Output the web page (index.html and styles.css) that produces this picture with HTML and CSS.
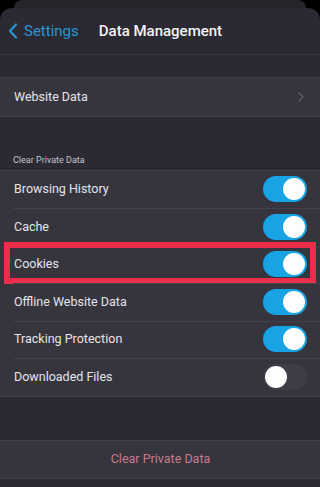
FILE: index.html
```html
<!DOCTYPE html>
<html>
<head>
<meta charset="utf-8">
<link rel="stylesheet" href="styles.css">
</head>
<body>
<div class="backsheet"></div>
<div class="sheet">
  <div class="nav">
    <div class="back">
      <svg class="chev" width="10" height="16" viewBox="0 0 10 16"><path d="M8 1.5 L2 8 L8 14.5" fill="none" stroke="#2796cf" stroke-width="2.2" stroke-linecap="round" stroke-linejoin="round"/></svg>
      <span>Settings</span>
    </div>
    <div class="title">Data Management</div>
  </div>
  <div class="gap1"></div>
  <div class="group">
    <div class="row link">
      <span class="label">Website Data</span>
      <svg class="disc" width="6" height="10" viewBox="0 0 6 10"><path d="M1 1 L5 5 L1 9" fill="none" stroke="#5f5e68" stroke-width="1.4" stroke-linecap="round" stroke-linejoin="round"/></svg>
    </div>
  </div>
  <div class="header">Clear Private Data</div>
  <div class="group">
    <div class="row"><span class="label">Browsing History</span><span class="toggle on"></span></div>
    <div class="row"><span class="label">Cache</span><span class="toggle on"></span></div>
    <div class="row highlight"><span class="label">Cookies</span><span class="toggle on"></span></div>
    <div class="row"><span class="label">Offline Website Data</span><span class="toggle on"></span></div>
    <div class="row"><span class="label">Tracking Protection</span><span class="toggle on"></span></div>
    <div class="row"><span class="label">Downloaded Files</span><span class="toggle"></span></div>
  </div>
  <div class="gap2"></div>
  <div class="group">
    <div class="row button">Clear Private Data</div>
  </div>
</div>
</body>
</html>
```
FILE: styles.css
```css
* { box-sizing: border-box; }
html, body { margin: 0; padding: 0; }
body {
  background: #000;
  width: 320px;
  height: 487px;
  overflow: hidden;
  font-family: Roboto, "Noto Sans", sans-serif;
}
.backsheet {
  height: 8px;
  margin: 0 14px;
  background: #26252c;
  border-radius: 12px 12px 0 0;
}
.sheet {
  background: #2b2a33;
  border-radius: 12px 12px 0 0;
  height: 479px;
  overflow: hidden;
}
.nav {
  height: 47px;
  display: flex;
  align-items: center;
  border-bottom: 1px solid #3a3942;
  padding-left: 8px;
}
.back {
  display: flex;
  align-items: center;
  gap: 6px;
  color: #2796cf;
  font-size: 15px;
}
.title {
  margin-left: 20px;
  color: #f2f2f5;
  font-size: 15px;
  font-weight: 500;
}
.gap1 { height: 22px; }
.group {
  background: #36353e;
  border-top: 1px solid #403f48;
  border-bottom: 1px solid #403f48;
}
.row {
  height: 37.5px;
  display: flex;
  align-items: center;
  justify-content: space-between;
  padding: 0 13px 0 14px;
  position: relative;
}
.row + .row::before {
  content: "";
  position: absolute;
  left: 13px;
  right: 0;
  top: 0;
  border-top: 1px solid #43424b;
}
.label {
  color: #e4e4ea;
  font-size: 12.5px;
  margin-top: -1px;
}
.disc { margin-right: 3px; }
.header {
  height: 53px;
  display: flex;
  align-items: flex-end;
  padding: 0 0 5px 13px;
  color: #c4c4cc;
  font-size: 9px;
}
.toggle {
  width: 44px;
  height: 26px;
  border-radius: 13px;
  background: #3e3d47;
  position: relative;
  flex: none;
}
.toggle::after {
  content: "";
  position: absolute;
  top: 2px;
  left: 2px;
  width: 22px;
  height: 22px;
  border-radius: 50%;
  background: #fdfdfd;
}
.toggle.on { background: #17a3e4; }
.toggle.on::after { left: 20px; }
.highlight::after {
  content: "";
  position: absolute;
  left: 4px;
  right: 4px;
  top: -4px;
  bottom: -1px;
  border: 6px solid #ec2e4c;
  pointer-events: none;
}
.gap2 { height: 43px; }
.button {
  justify-content: center;
  color: #c77a8c;
  font-size: 12.5px;
  padding-bottom: 1px;
}
```
